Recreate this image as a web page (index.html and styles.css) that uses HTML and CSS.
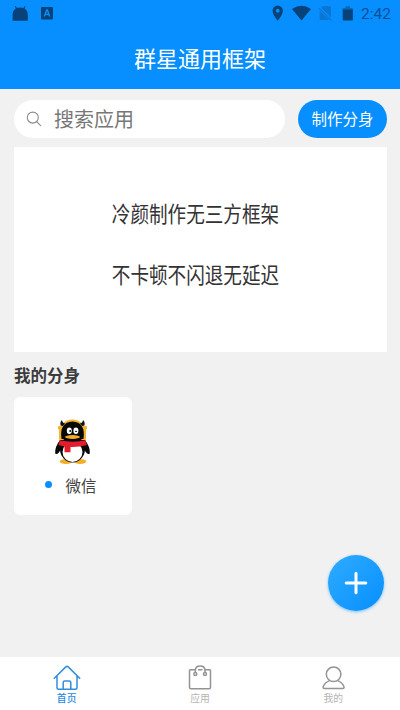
FILE: index.html
```html
<!DOCTYPE html>
<html lang="zh-CN">
<head>
<meta charset="utf-8">
<title>群星通用框架</title>
<link rel="stylesheet" href="styles.css">
</head>
<body>
<div class="app">
  <header class="header">
    <div class="status">
      <svg class="status-left" width="60" height="28" viewBox="0 0 60 28" fill="#07427a">
        <path d="M12.6 20.700V14.500Q12.600 10.500 15.800 8.500L14.800 6.300L15.500 5.900L17 8Q20.200 6.800 23.400 8L24.900 5.900L25.600 6.300L24.600 8.500Q27.800 10.500 27.800 14.500V20.700Z"/>
        <path fill-rule="evenodd" d="M42 7h10q1 0 1 1v10.500q0 1-1 1H42q-1 0-1-1V8q0-1 1-1ZM46.200 9.200L43.600 16.600H45.200L45.700 15H48.300L48.800 16.600H50.400L47.800 9.200ZM47 11L47.900 13.700H46.100Z"/>
      </svg>
      <svg class="status-right" width="90" height="28" viewBox="268 0 90 28" fill="#07427a">
        <path fill-rule="evenodd" d="M277.700 5.500a5.200 5.200 0 0 1 5.200 5.200c0 4-5.200 10-5.200 10s-5.200-6-5.200-10a5.200 5.200 0 0 1 5.200-5.200Zm0 3.300a1.900 1.900 0 1 0 0 3.800a1.900 1.900 0 0 0 0-3.800Z"/>
        <path d="M292 9Q301.500 2.300 311 9L301.500 20.500Z"/>
        <path fill="#0876d2" d="M322.600 6.200H330q1 0 1 1V17.300L321 7.800ZM319.600 10.500L329.500 20H320.600q-1 0-1-1Z"/>
        <path d="M318.600 7.800L331.500 20.300" stroke="#0876d2" stroke-width="1.100"/>
        <path fill="#0868b9" d="M345.500 6.300h4.500v1.600h2.700v3h-10v-3h2.800Z"/>
        <path d="M342.700 9.500h10.200v10q0 1-1 1h-8.200q-1 0-1-1Z"/>
      </svg>
      <span class="clock">2:42</span>
    </div>
    <h1 class="title">群星通用框架</h1>
  </header>
  <main class="content">
    <div class="toolbar">
      <div class="search">
        <svg width="16" height="16" viewBox="0 0 16 16" fill="none" stroke="#8b8b8b" stroke-width="1.100" stroke-linecap="round"><circle cx="6.800" cy="6.600" r="5.500"/><path d="M10.700 10.700L14.600 14.600"/></svg>
        <span>搜索应用</span>
      </div>
      <div class="make">制作分身</div>
    </div>
    <section class="banner">
      <p>冷颜制作无三方框架</p>
      <p>不卡顿不闪退无延迟</p>
    </section>
    <h2 class="heading">我的分身</h2>
    <div class="card">
      <svg class="penguin" width="38" height="48" viewBox="54 418 38 48">
        <ellipse cx="66" cy="461.500" rx="6.200" ry="2.400" fill="#f3ad27"/>
        <ellipse cx="80" cy="461.500" rx="6.200" ry="2.400" fill="#f3ad27"/>
        <rect x="58" y="426" width="29" height="3.500" rx="1" fill="#f3b52f"/>
        <rect x="59" y="427" width="27" height="14" rx="3" fill="#f3b52f"/>
        <circle cx="72.500" cy="433" r="13.500" fill="#f3b52f"/>
        <path d="M60.500 425.500Q59.800 421.500 62 420Q62.200 423 65 423.200L63 426ZM84.500 425.500Q85.200 421.500 83 420Q82.800 423 80 423.200L82 426Z" fill="#111"/>
        <path d="M60 440Q54.600 447 55.200 453.500Q57.500 455.500 60.500 450H84.500Q87.500 455.500 89.800 453.500Q90.400 447 85 440Z" fill="#080808"/>
        <ellipse cx="72.500" cy="449" rx="12.500" ry="13.500" fill="#080808"/>
        <path d="M61.500 439Q59.200 422 72.500 421.500Q85.800 422 83.500 439Z" fill="#080808"/>
        <ellipse cx="72.500" cy="452" rx="10" ry="10" fill="#fff"/>
        <ellipse cx="69.300" cy="430.800" rx="2.500" ry="3.200" fill="#fff"/>
        <ellipse cx="75.900" cy="430.800" rx="2.500" ry="3.200" fill="#fff"/>
        <circle cx="70.200" cy="431" r="1" fill="#111"/>
        <path d="M75 432Q76 429.700 77 432" fill="none" stroke="#111" stroke-width=".9"/>
        <ellipse cx="72.500" cy="437" rx="7.400" ry="1.900" fill="#f3ad27"/>
        <path d="M59.700 440.300Q72.500 443 85.500 440.300L86.800 445Q79 447.300 70.500 447V452.300H64.500V446.500L58.500 445Z" fill="#e51c2c"/>
      </svg>
      <div class="card-label"><i class="dot"></i><span>微信</span></div>
    </div>
  </main>
  <div class="fab">
    <svg width="24" height="24" viewBox="0 0 24 24" stroke="#fff" stroke-width="3" stroke-linecap="round"><path d="M12 2.200V21.800M2.200 12H21.800"/></svg>
  </div>
  <nav class="tabs">
    <div class="tab tab-active">
      <svg width="28" height="26" viewBox="0 0 28 26" fill="none" stroke="#348ddb" stroke-width="1.500" stroke-linecap="round" stroke-linejoin="round"><path d="M1.300 13.200L12.800 1.900Q14 .9 15.200 1.900L26.700 13.200M4 11V22.700Q4 24.200 5.500 24.200H22.500Q24 24.200 24 22.700V11M10.200 24V17.500Q10.200 16 11.700 16H16.300Q17.800 16 17.800 17.500V24"/></svg>
      <span>首页</span>
    </div>
    <div class="tab">
      <svg width="28" height="26" viewBox="0 0 28 26" fill="none" stroke="#949494" stroke-width="1.500" stroke-linejoin="round"><path d="M9.300 4.800H4.300Q3.500 4.800 3.500 5.800V22.300Q3.500 23.800 5 23.800H23Q24.500 23.800 24.500 22.300V5.800Q24.500 4.800 23.700 4.800H19M12 4.800H16.500M9.300 8V5.500Q9.300 .9 14.200 .9Q19 .9 19 5.500V8"/><circle cx="9.300" cy="9" r="1.500"/><circle cx="19" cy="9" r="1.500"/></svg>
      <span>应用</span>
    </div>
    <div class="tab">
      <svg width="28" height="26" viewBox="0 0 28 26" fill="none" stroke="#949494" stroke-width="1.500" stroke-linejoin="round"><circle cx="14.600" cy="9.300" r="7.300"/><path d="M10.600 15.600Q5.600 17.500 4.200 21.800Q3.800 23.400 5.400 23.400H23.800Q25.400 23.400 25 21.800Q23.600 17.500 18.600 15.600"/></svg>
      <span>我的</span>
    </div>
  </nav>
</div>
</body>
</html>
```
FILE: styles.css
```css
* { box-sizing: border-box; }
body { margin: 0; font-family: "Noto Sans CJK SC", sans-serif; }
h1, h2, p { margin: 0; }
svg { display: block; flex: none; }
.app {
  position: relative;
  display: flex;
  flex-direction: column;
  width: 400px;
  height: 710px;
  overflow: hidden;
  background: #f1f1f1;
}
.header { height: 88.500px; background: #078fff; }
.status { display: flex; height: 28px; }
.status-right { margin-left: 208px; }
.clock {
  margin-left: 3px;
  font: 15.500px/28px Roboto, sans-serif;
  color: #07509a;
}
.title {
  font-size: 22px;
  font-weight: 400;
  line-height: 58px;
  text-align: center;
  color: #fff;
}
.content { flex: 1; padding: 11px 13px 0 14px; }
.toolbar { display: flex; gap: 13px; height: 38px; }
.search {
  display: flex;
  align-items: center;
  width: 271px;
  padding-left: 12px;
  gap: 12px;
  border-radius: 19px;
  background: #fff;
  font-size: 20px;
  line-height: 38px;
  color: #777;
}
.make {
  flex: 1;
  border-radius: 19px;
  background: #078fff;
  color: #fff;
  font-size: 15.500px;
  line-height: 37px;
  text-align: center;
}
.banner {
  height: 205px;
  margin-top: 9px;
  padding-top: 35px;
  background: #fff;
}
.banner p {
  width: 363px;
  font-size: 22px;
  line-height: 61px;
  text-align: center;
  color: #333;
  transform: scaleX(.845);
}
.heading {
  margin-top: 11px;
  font-size: 16.500px;
  font-weight: 700;
  line-height: 24px;
  color: #3c3c3c;
}
.card {
  display: flex;
  flex-direction: column;
  align-items: center;
  width: 118px;
  height: 118px;
  margin-top: 10px;
  padding-top: 21px;
  border-radius: 6px;
  background: #fff;
}
.card-label {
  display: flex;
  align-items: center;
  gap: 13px;
  margin-top: 7px;
  padding-right: 4px;
  font-size: 15.500px;
  line-height: 24px;
  color: #444;
}
.dot { width: 7px; height: 7px; border-radius: 50%; background: #078fff; }
.fab {
  position: absolute;
  left: 328px;
  top: 555px;
  display: flex;
  align-items: center;
  justify-content: center;
  width: 56px;
  height: 56px;
  border-radius: 50%;
  background: linear-gradient(135deg, #2eacff, #078fff);
  box-shadow: 0 1px 3px rgba(7, 143, 255, .5);
}
.tabs { display: flex; height: 53px; background: #fff; }
.tab {
  flex: 1;
  display: flex;
  flex-direction: column;
  align-items: center;
  padding-top: 8px;
  font-size: 9.800px;
  line-height: 14px;
  color: #b5b5b5;
}
.tab-active { color: #2789df; font-weight: 500; }
```
